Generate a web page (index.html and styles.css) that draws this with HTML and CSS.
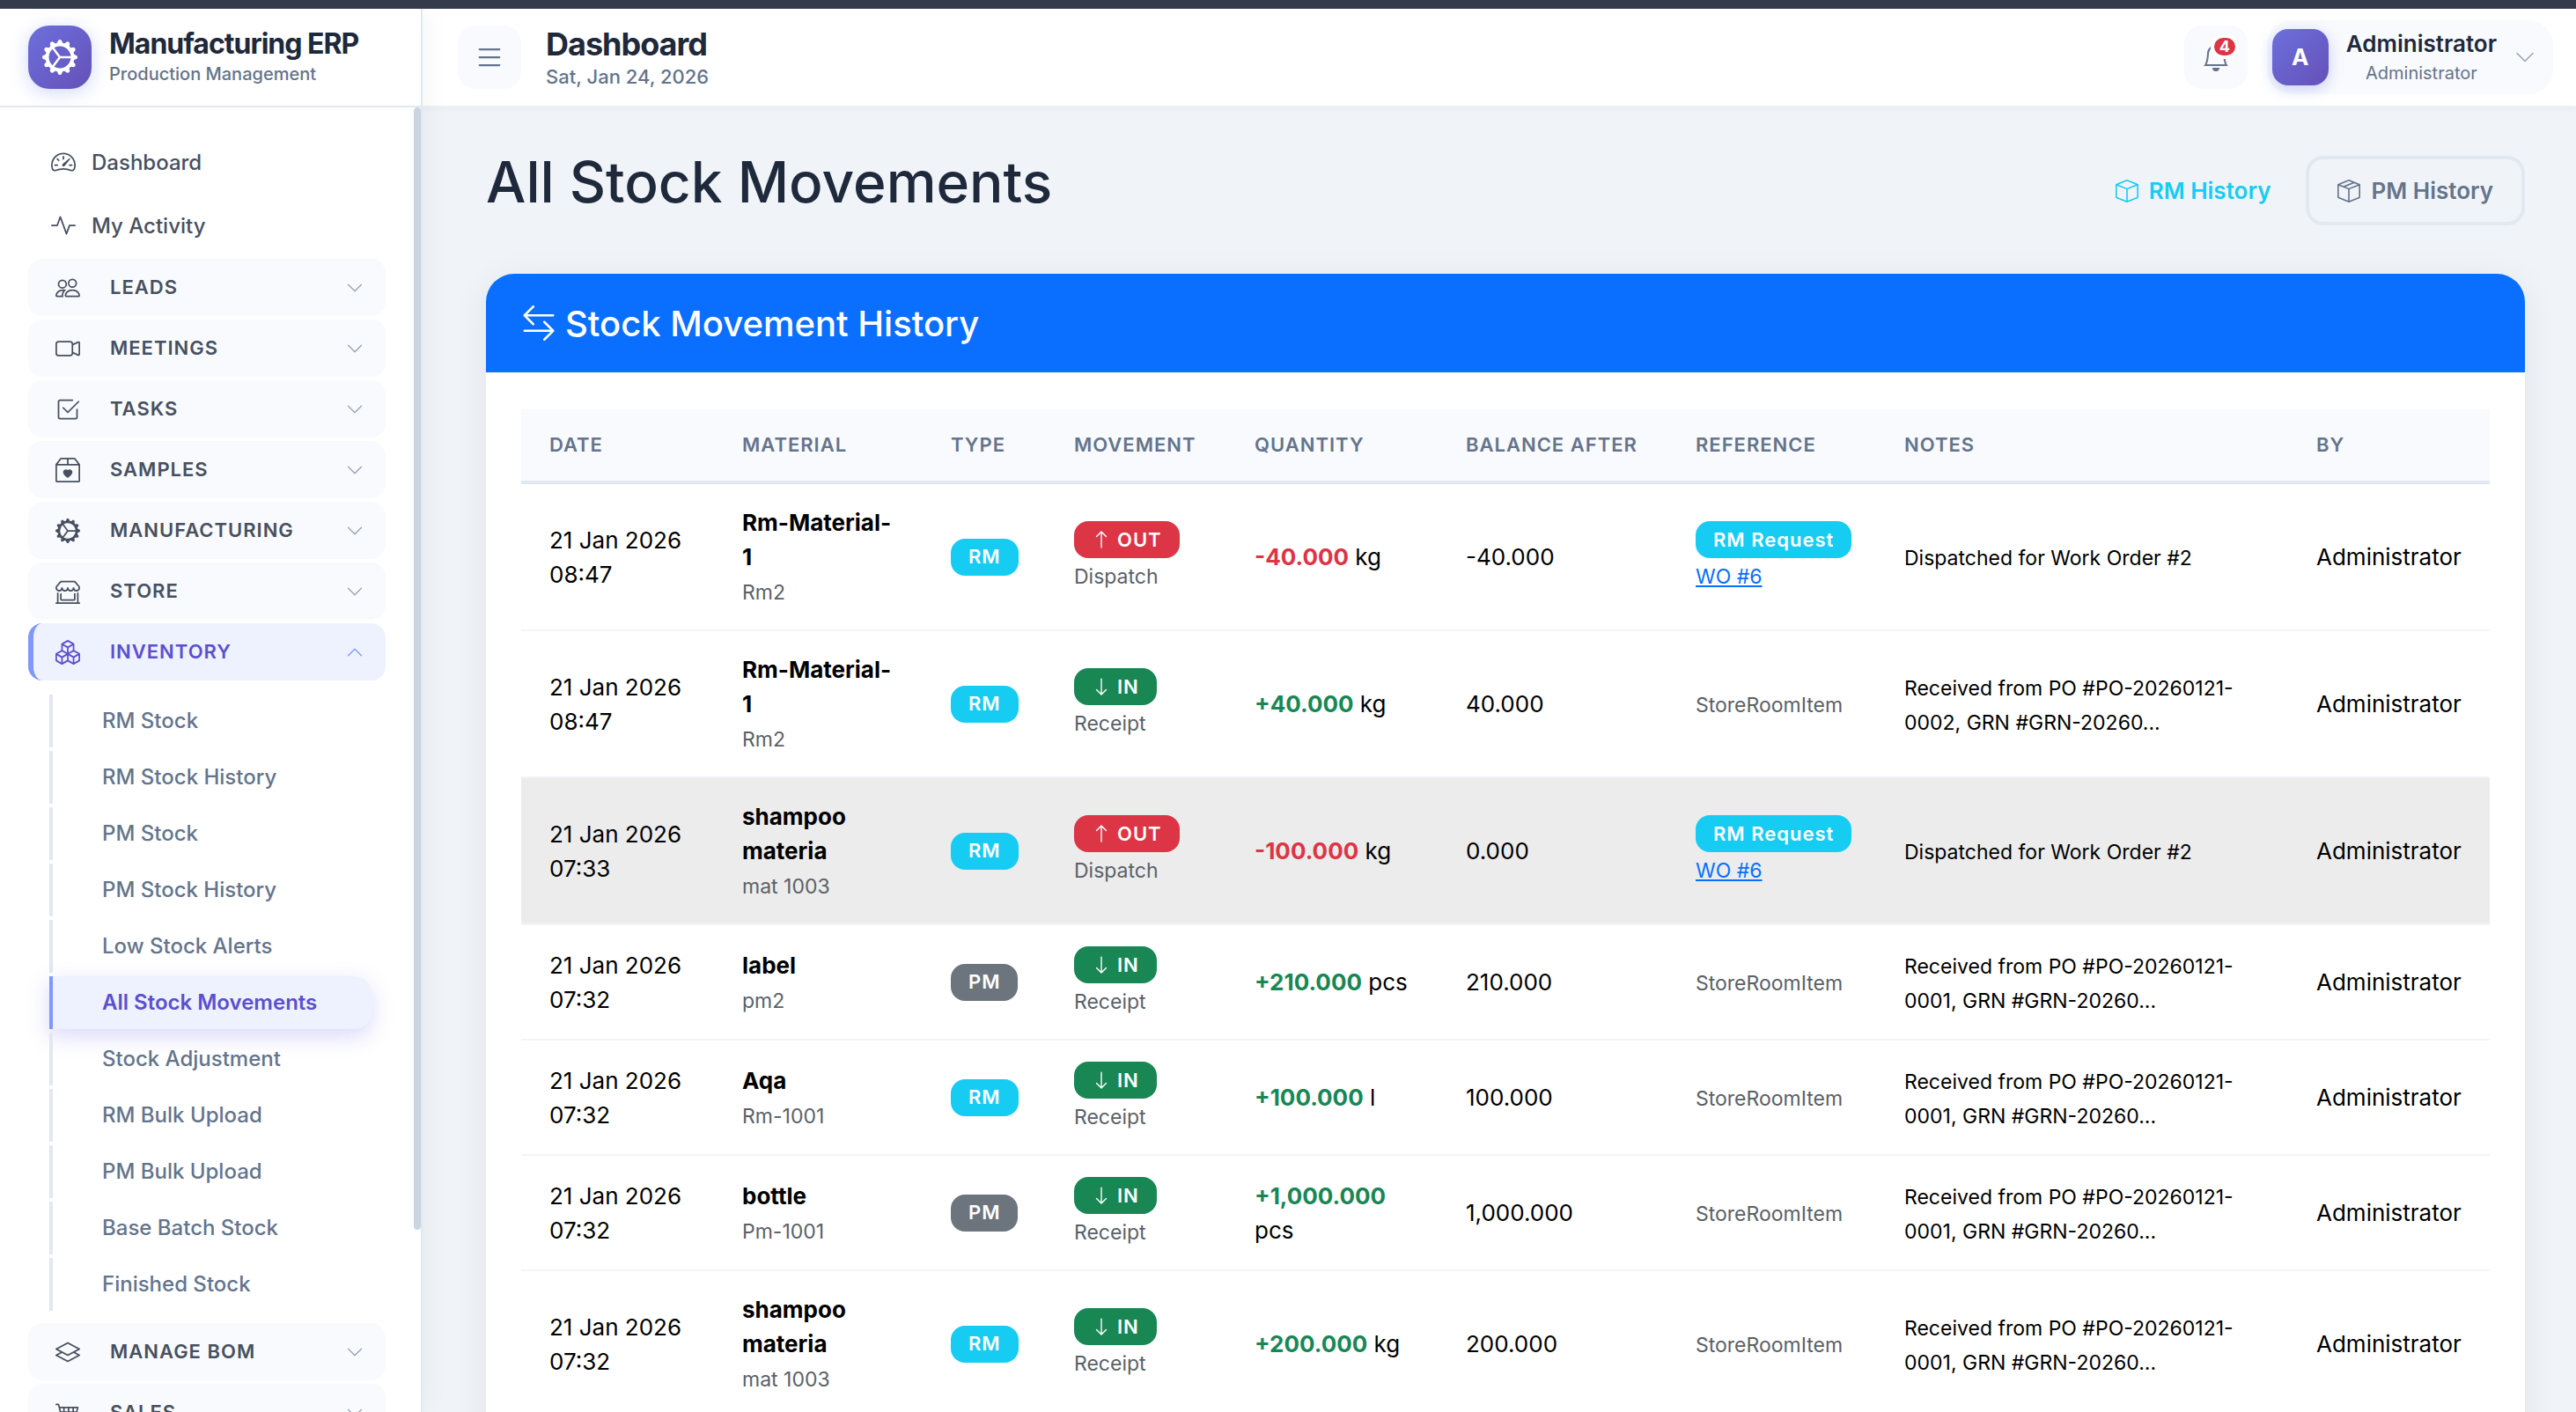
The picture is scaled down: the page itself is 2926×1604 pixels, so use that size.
FILE: index.html
```html
<!DOCTYPE html>
<html lang="en">
<head>
<meta charset="utf-8">
<title>All Stock Movements - Manufacturing ERP</title>
<link rel="stylesheet" href="styles.css">
</head>
<body>
<svg class="sprite" aria-hidden="true">
  <symbol id="gear" viewBox="0 0 16 16"><path d="M7.068.727c.243-.97 1.62-.97 1.864 0l.071.286a.96.96 0 0 0 1.622.434l.205-.211c.695-.719 1.888-.03 1.613.931l-.08.284a.96.96 0 0 0 1.187 1.187l.283-.081c.96-.275 1.65.918.931 1.613l-.211.205a.96.96 0 0 0 .434 1.622l.286.071c.97.243.97 1.62 0 1.864l-.286.071a.96.96 0 0 0-.434 1.622l.211.205c.719.695.03 1.888-.931 1.613l-.284-.08a.96.96 0 0 0-1.187 1.187l.081.283c.275.96-.918 1.65-1.613.931l-.205-.211a.96.96 0 0 0-1.622.434l-.071.286c-.243.97-1.62.97-1.864 0l-.071-.286a.96.96 0 0 0-1.622-.434l-.205.211c-.695.719-1.888.03-1.613-.931l.08-.284a.96.96 0 0 0-1.186-1.187l-.284.081c-.96.275-1.65-.918-.931-1.613l.211-.205a.96.96 0 0 0-.434-1.622l-.286-.071c-.97-.243-.97-1.62 0-1.864l.286-.071a.96.96 0 0 0 .434-1.622l-.211-.205c-.719-.695-.03-1.888.931-1.613l.284.08a.96.96 0 0 0 1.187-1.186l-.081-.284c-.275-.96.918-1.65 1.613-.931l.205.211a.96.96 0 0 0 1.622-.434zM12.973 8.5H8.25l-2.834 3.779A4.998 4.998 0 0 0 12.973 8.5m0-1a4.998 4.998 0 0 0-7.557-3.779l2.834 3.78zM5.048 3.967l-.087.065zm-.431.355A4.98 4.98 0 0 0 3.002 8c0 1.455.622 2.765 1.615 3.678L7.375 8zm.344 7.646.087.065z"/></symbol>
  <symbol id="speedometer" viewBox="0 0 16 16"><path d="M8 4a.5.5 0 0 1 .5.5V6a.5.5 0 0 1-1 0V4.5A.5.5 0 0 1 8 4M3.732 5.732a.5.5 0 0 1 .707 0l.915.914a.5.5 0 1 1-.708.708l-.914-.915a.5.5 0 0 1 0-.707M2 10a.5.5 0 0 1 .5-.5h1.586a.5.5 0 0 1 0 1H2.5A.5.5 0 0 1 2 10m9.5 0a.5.5 0 0 1 .5-.5h1.5a.5.5 0 0 1 0 1H12a.5.5 0 0 1-.5-.5m.754-4.246a.39.39 0 0 0-.527-.02L7.547 9.31a.91.91 0 1 0 1.302 1.258l3.434-4.297a.39.39 0 0 0-.029-.518z"/><path fill-rule="evenodd" d="M0 10a8 8 0 1 1 15.547 2.661c-.442 1.253-1.845 1.602-2.932 1.25C11.309 13.488 9.475 13 8 13c-1.474 0-3.31.488-4.615.911-1.087.352-2.49.003-2.932-1.25A8 8 0 0 1 0 10m8-7a7 7 0 0 0-6.603 9.329c.203.575.923.876 1.68.63C4.397 12.533 6.358 12 8 12s3.604.532 4.923.96c.757.245 1.477-.056 1.68-.631A7 7 0 0 0 8 3"/></symbol>
  <symbol id="activity" viewBox="0 0 16 16"><path fill-rule="evenodd" d="M6 2a.5.5 0 0 1 .47.33L10 12.036l1.53-4.208A.5.5 0 0 1 12 7.5h3.5a.5.5 0 0 1 0 1h-3.15l-1.88 5.17a.5.5 0 0 1-.94 0L6 3.964 4.47 8.171A.5.5 0 0 1 4 8.5H.5a.5.5 0 0 1 0-1h3.15l1.88-5.17A.5.5 0 0 1 6 2"/></symbol>
  <symbol id="people" viewBox="0 0 16 16"><path d="M15 14s1 0 1-1-1-4-5-4-5 3-5 4 1 1 1 1zm-7.978-1L7 12.996c.001-.264.167-1.03.76-1.72C8.312 10.629 9.282 10 11 10c1.717 0 2.687.63 3.24 1.276.593.69.758 1.457.76 1.72l-.008.002-.014.002zM11 7a2 2 0 1 0 0-4 2 2 0 0 0 0 4m3-2a3 3 0 1 1-6 0 3 3 0 0 1 6 0M6.936 9.28a6 6 0 0 0-1.23-.247A7 7 0 0 0 5 9c-4 0-5 3-5 4q0 1 1 1h4.216A2.24 2.24 0 0 1 5 13c0-1.01.377-2.042 1.09-2.904.243-.294.526-.569.846-.816M4.92 10A5.5 5.5 0 0 0 4 13H1c0-.26.164-1.03.76-1.724.545-.636 1.492-1.256 3.16-1.275ZM1.5 5.5a3 3 0 1 1 6 0 3 3 0 0 1-6 0m3-2a2 2 0 1 0 0 4 2 2 0 0 0 0-4"/></symbol>
  <symbol id="camera" viewBox="0 0 16 16"><path fill-rule="evenodd" d="M0 5a2 2 0 0 1 2-2h7.5a2 2 0 0 1 1.983 1.738l3.11-1.382A1 1 0 0 1 16 4.269v7.462a1 1 0 0 1-1.406.913l-3.111-1.382A2 2 0 0 1 9.5 13H2a2 2 0 0 1-2-2zm11.5 5.175 3.5 1.556V4.269l-3.5 1.556zM2 4a1 1 0 0 0-1 1v6a1 1 0 0 0 1 1h7.5a1 1 0 0 0 1-1V5a1 1 0 0 0-1-1z"/></symbol>
  <symbol id="check" viewBox="0 0 16 16"><path d="M3 14.5A1.5 1.5 0 0 1 1.5 13V3A1.5 1.5 0 0 1 3 1.5h8a.5.5 0 0 1 0 1H3a.5.5 0 0 0-.5.5v10a.5.5 0 0 0 .5.5h10a.5.5 0 0 0 .5-.5V8a.5.5 0 0 1 1 0v5a1.5 1.5 0 0 1-1.5 1.5z"/><path d="m8.354 10.354 7-7a.5.5 0 0 0-.708-.708L8 9.293 5.354 6.646a.5.5 0 1 0-.708.708l3 3a.5.5 0 0 0 .708 0"/></symbol>
  <symbol id="box-heart" viewBox="0 0 16 16"><path d="M8 7.982C9.664 6.309 13.825 9.236 8 13 2.175 9.236 6.336 6.31 8 7.982"/><path d="M3.75 0a1 1 0 0 0-.8.4L.1 4.2a.5.5 0 0 0-.1.3V15a1 1 0 0 0 1 1h14a1 1 0 0 0 1-1V4.5a.5.5 0 0 0-.1-.3L13.05.4a1 1 0 0 0-.8-.4zm0 1H7.5v3h-6zM8.5 4V1h3.75l2.25 3zM15 5v10H1V5z"/></symbol>
  <symbol id="shop" viewBox="0 0 16 16"><path d="M2.97 1.35A1 1 0 0 1 3.73 1h8.54a1 1 0 0 1 .76.35l2.609 3.044A1.5 1.5 0 0 1 16 5.37v.255a2.375 2.375 0 0 1-4.25 1.458A2.37 2.37 0 0 1 9.875 8 2.37 2.37 0 0 1 8 7.083 2.37 2.37 0 0 1 6.125 8a2.37 2.37 0 0 1-1.875-.917A2.375 2.375 0 0 1 0 5.625V5.37a1.5 1.5 0 0 1 .361-.976zm1.78 4.275a1.375 1.375 0 0 0 2.75 0 .5.5 0 0 1 1 0 1.375 1.375 0 0 0 2.75 0 .5.5 0 0 1 1 0 1.375 1.375 0 1 0 2.75 0V5.37a.5.5 0 0 0-.12-.325L12.27 2H3.73L1.12 5.045A.5.5 0 0 0 1 5.37v.255a1.375 1.375 0 0 0 2.75 0 .5.5 0 0 1 1 0M1.5 8.5A.5.5 0 0 1 2 9v6h12V9a.5.5 0 0 1 1 0v6h.5a.5.5 0 0 1 0 1H.5a.5.5 0 0 1 0-1H1V9a.5.5 0 0 1 .5-.5m2 .5a.5.5 0 0 1 .5.5V13h8V9.5a.5.5 0 0 1 1 0V13a1 1 0 0 1-1 1H4a1 1 0 0 1-1-1V9.5a.5.5 0 0 1 .5-.5"/></symbol>
  <symbol id="boxes" viewBox="0 0 16 16"><path d="M7.752.066a.5.5 0 0 1 .496 0l3.75 2.143a.5.5 0 0 1 .252.434v3.995l3.498 2A.5.5 0 0 1 16 9.07v4.286a.5.5 0 0 1-.252.434l-3.75 2.143a.5.5 0 0 1-.496 0l-3.502-2-3.502 2.001a.5.5 0 0 1-.496 0l-3.75-2.143A.5.5 0 0 1 0 13.357V9.071a.5.5 0 0 1 .252-.434L3.75 6.638V2.643a.5.5 0 0 1 .252-.434zM4.25 7.504 1.508 9.071l2.742 1.567 2.742-1.567zM7.5 9.933l-2.75 1.571v3.134l2.75-1.571zm1 3.134 2.75 1.571v-3.134L8.5 9.933zm.508-3.996 2.742 1.567 2.742-1.567-2.742-1.567zm2.242-2.433V3.504L8.5 5.076V8.21zM7.5 8.21V5.076L4.75 3.504v3.134zM5.258 2.643 8 4.21l2.742-1.567L8 1.076zM15 9.933l-2.75 1.571v3.134L15 13.067zM3.75 14.638v-3.134L1 9.933v3.134z"/></symbol>
  <symbol id="layers" viewBox="0 0 16 16"><path d="M8.235 1.559a.5.5 0 0 0-.47 0l-7.5 4a.5.5 0 0 0 0 .882L3.188 8 .264 9.559a.5.5 0 0 0 0 .882l7.5 4a.5.5 0 0 0 .47 0l7.5-4a.5.5 0 0 0 0-.882L12.813 8l2.922-1.559a.5.5 0 0 0 0-.882zm3.515 7.008L14.438 10 8 13.433 1.562 10 4.25 8.567l3.515 1.874a.5.5 0 0 0 .47 0zM8 9.433 1.562 6 8 2.567 14.438 6z"/></symbol>
  <symbol id="cart" viewBox="0 0 16 16"><path d="M0 2.5A.5.5 0 0 1 .5 2H2a.5.5 0 0 1 .485.379L2.89 4H14.5a.5.5 0 0 1 .485.621l-1.5 6A.5.5 0 0 1 13 11H4a.5.5 0 0 1-.485-.379L1.61 3H.5a.5.5 0 0 1-.5-.5M3.14 5l.5 2H5V5zM6 5v2h2V5zm3 0v2h2V5zm3 0v2h1.36l.5-2zm1.11 3H12v2h.61zM11 8H9v2h2zM8 8H6v2h2zM5 8H3.89l.5 2H5zm0 5a1 1 0 1 0 0 2 1 1 0 0 0 0-2m-2 1a2 2 0 1 1 4 0 2 2 0 0 1-4 0m9-1a1 1 0 1 0 0 2 1 1 0 0 0 0-2m-2 1a2 2 0 1 1 4 0 2 2 0 0 1-4 0"/></symbol>
  <symbol id="list" viewBox="0 0 16 16"><path fill-rule="evenodd" d="M2.5 12a.5.5 0 0 1 .5-.5h10a.5.5 0 0 1 0 1H3a.5.5 0 0 1-.5-.5m0-4a.5.5 0 0 1 .5-.5h10a.5.5 0 0 1 0 1H3a.5.5 0 0 1-.5-.5m0-4a.5.5 0 0 1 .5-.5h10a.5.5 0 0 1 0 1H3a.5.5 0 0 1-.5-.5"/></symbol>
  <symbol id="bell" viewBox="0 0 16 16"><path d="M8 16a2 2 0 0 0 2-2H6a2 2 0 0 0 2 2M8 1.918l-.797.161A4 4 0 0 0 4 6c0 .628-.134 2.197-.459 3.742-.16.767-.376 1.566-.663 2.258h10.244c-.287-.692-.502-1.49-.663-2.258C12.134 8.197 12 6.628 12 6a4 4 0 0 0-3.203-3.92zM14.22 12c.223.447.481.801.78 1H1c.299-.199.557-.553.78-1C2.68 10.2 3 6.88 3 6c0-2.42 1.72-4.44 4.005-4.901a1 1 0 1 1 1.99 0A5 5 0 0 1 13 6c0 .88.32 4.2 1.22 6"/></symbol>
  <symbol id="chevron" viewBox="0 0 16 16"><path fill-rule="evenodd" d="M1.646 4.646a.5.5 0 0 1 .708 0L8 10.293l5.646-5.647a.5.5 0 0 1 .708.708l-6 6a.5.5 0 0 1-.708 0l-6-6a.5.5 0 0 1 0-.708"/></symbol>
  <symbol id="swap" viewBox="0 0 16 16"><path fill-rule="evenodd" d="M1 11.5a.5.5 0 0 0 .5.5h11.793l-3.147 3.146a.5.5 0 0 0 .708.708l4-4a.5.5 0 0 0 0-.708l-4-4a.5.5 0 0 0-.708.708L13.293 11H1.5a.5.5 0 0 0-.5.5m14-7a.5.5 0 0 1-.5.5H2.707l3.147 3.146a.5.5 0 1 1-.708.708l-4-4a.5.5 0 0 1 0-.708l4-4a.5.5 0 1 1 .708.708L2.707 4H14.5a.5.5 0 0 1 .5.5"/></symbol>
  <symbol id="box" viewBox="0 0 16 16"><path d="M8.186 1.113a.5.5 0 0 0-.372 0L1.846 3.5 8 5.961 14.154 3.5zM15 4.239l-6.5 2.6v7.922l6.5-2.6V4.24zM7.5 14.762V6.838L1 4.239v7.923zM7.443.184a1.5 1.5 0 0 1 1.114 0l7.129 2.852A.5.5 0 0 1 16 3.5v8.662a1 1 0 0 1-.629.928l-7.185 2.874a.5.5 0 0 1-.372 0L.63 13.09a1 1 0 0 1-.63-.928V3.5a.5.5 0 0 1 .314-.464z"/></symbol>
  <symbol id="box-seam" viewBox="0 0 16 16"><path d="M8.186 1.113a.5.5 0 0 0-.372 0L1.846 3.5l2.404.961L10.404 2zm3.564 1.426L5.596 5 8 5.961 14.154 3.5zm3.25 1.7-6.5 2.6v7.922l6.5-2.6V4.24zM7.5 14.762V6.838L1 4.239v7.923zM7.443.184a1.5 1.5 0 0 1 1.114 0l7.129 2.852A.5.5 0 0 1 16 3.5v8.662a1 1 0 0 1-.629.928l-7.185 2.874a.5.5 0 0 1-.372 0L.63 13.09a1 1 0 0 1-.63-.928V3.5a.5.5 0 0 1 .314-.464z"/></symbol>
  <symbol id="arrow-up" viewBox="0 0 16 16"><path fill-rule="evenodd" d="M8 15a.5.5 0 0 0 .5-.5V2.707l3.146 3.147a.5.5 0 0 0 .708-.708l-4-4a.5.5 0 0 0-.708 0l-4 4a.5.5 0 1 0 .708.708L7.5 2.707V14.5a.5.5 0 0 0 .5.5"/></symbol>
  <symbol id="arrow-down" viewBox="0 0 16 16"><path fill-rule="evenodd" d="M8 1a.5.5 0 0 1 .5.5v11.793l3.146-3.147a.5.5 0 0 1 .708.708l-4 4a.5.5 0 0 1-.708 0l-4-4a.5.5 0 0 1 .708-.708L7.5 13.293V1.5A.5.5 0 0 1 8 1"/></symbol>
</svg>

<div class="layout">
  <aside class="sidebar">
    <div class="brand">
      <span class="brand-logo"><svg class="icon icon-40"><use href="#gear"/></svg></span>
      <div>
        <div class="brand-name">Manufacturing ERP</div>
        <div class="brand-sub">Production Management</div>
      </div>
    </div>
    <nav class="nav" aria-label="Main">
      <a class="nav-link" href="#"><svg class="icon icon-28"><use href="#speedometer"/></svg>Dashboard</a>
      <a class="nav-link" href="#"><svg class="icon icon-28"><use href="#activity"/></svg>My Activity</a>
      <button class="nav-group" type="button"><svg class="icon icon-28"><use href="#people"/></svg><span>Leads</span><svg class="icon chevron"><use href="#chevron"/></svg></button>
      <button class="nav-group" type="button"><svg class="icon icon-28"><use href="#camera"/></svg><span>Meetings</span><svg class="icon chevron"><use href="#chevron"/></svg></button>
      <button class="nav-group" type="button"><svg class="icon icon-28"><use href="#check"/></svg><span>Tasks</span><svg class="icon chevron"><use href="#chevron"/></svg></button>
      <button class="nav-group" type="button"><svg class="icon icon-28"><use href="#box-heart"/></svg><span>Samples</span><svg class="icon chevron"><use href="#chevron"/></svg></button>
      <button class="nav-group" type="button"><svg class="icon icon-28"><use href="#gear"/></svg><span>Manufacturing</span><svg class="icon chevron"><use href="#chevron"/></svg></button>
      <button class="nav-group" type="button"><svg class="icon icon-28"><use href="#shop"/></svg><span>Store</span><svg class="icon chevron"><use href="#chevron"/></svg></button>
      <button class="nav-group open" type="button" aria-expanded="true"><svg class="icon icon-28"><use href="#boxes"/></svg><span>Inventory</span><svg class="icon chevron"><use href="#chevron"/></svg></button>
      <div class="subnav">
        <a href="#">RM Stock</a>
        <a href="#">RM Stock History</a>
        <a href="#">PM Stock</a>
        <a href="#">PM Stock History</a>
        <a href="#">Low Stock Alerts</a>
        <a class="active" href="#" aria-current="page">All Stock Movements</a>
        <a href="#">Stock Adjustment</a>
        <a href="#">RM Bulk Upload</a>
        <a href="#">PM Bulk Upload</a>
        <a href="#">Base Batch Stock</a>
        <a href="#">Finished Stock</a>
      </div>
      <button class="nav-group" type="button"><svg class="icon icon-28"><use href="#layers"/></svg><span>Manage BOM</span><svg class="icon chevron"><use href="#chevron"/></svg></button>
      <button class="nav-group" type="button"><svg class="icon icon-28"><use href="#cart"/></svg><span>Sales</span><svg class="icon chevron"><use href="#chevron"/></svg></button>
      <div class="scroll-thumb"></div>
    </nav>
  </aside>

  <div class="page">
    <header class="topbar">
      <button class="icon-btn toggle" type="button" aria-label="Toggle menu"><svg class="icon icon-36"><use href="#list"/></svg></button>
      <div class="topbar-title">
        <div class="topbar-name">Dashboard</div>
        <div class="topbar-date">Sat, Jan 24, 2026</div>
      </div>
      <button class="icon-btn bell" type="button" aria-label="Notifications"><svg class="icon icon-32"><use href="#bell"/></svg><span class="count">4</span></button>
      <button class="user" type="button">
        <span class="avatar">A</span>
        <span class="user-text"><span class="user-name">Administrator</span><span class="user-role">Administrator</span></span>
        <svg class="icon icon-24"><use href="#chevron"/></svg>
      </button>
    </header>

    <main class="content">
      <div class="page-head">
        <h1>All Stock Movements</h1>
        <div class="actions">
          <a class="btn btn-info" href="#"><svg class="icon icon-26"><use href="#box"/></svg>RM History</a>
          <a class="btn btn-outline" href="#"><svg class="icon icon-26"><use href="#box-seam"/></svg>PM History</a>
        </div>
      </div>

      <section class="card">
        <h2 class="card-head"><svg class="icon icon-40"><use href="#swap"/></svg>Stock Movement History</h2>
        <div class="card-body">
          <table>
            <colgroup>
              <col class="c-date"><col class="c-material"><col class="c-type"><col class="c-movement"><col class="c-quantity"><col class="c-balance"><col class="c-reference"><col><col class="c-by">
            </colgroup>
            <thead>
              <tr><th>Date</th><th>Material</th><th>Type</th><th>Movement</th><th>Quantity</th><th>Balance After</th><th>Reference</th><th>Notes</th><th>By</th></tr>
            </thead>
            <tbody>
              <tr>
                <td>21 Jan 2026 08:47</td>
                <td><strong>Rm-Material-1</strong><br><small>Rm2</small></td>
                <td><span class="badge info">RM</span></td>
                <td><span class="badge danger"><svg class="icon icon-22"><use href="#arrow-up"/></svg>OUT</span><small>Dispatch</small></td>
                <td><strong class="minus">-40.000</strong> kg</td>
                <td>-40.000</td>
                <td><span class="badge info">RM Request</span><small><a href="#">WO #6</a></small></td>
                <td><small class="note">Dispatched for Work Order #2</small></td>
                <td>Administrator</td>
              </tr>
              <tr>
                <td>21 Jan 2026 08:47</td>
                <td><strong>Rm-Material-1</strong><br><small>Rm2</small></td>
                <td><span class="badge info">RM</span></td>
                <td><span class="badge success"><svg class="icon icon-22"><use href="#arrow-down"/></svg>IN</span><small>Receipt</small></td>
                <td><strong class="plus">+40.000</strong> kg</td>
                <td>40.000</td>
                <td><small>StoreRoomItem</small></td>
                <td><small class="note">Received from PO #PO-20260121-0002, GRN #GRN-20260...</small></td>
                <td>Administrator</td>
              </tr>
              <tr class="hovered">
                <td>21 Jan 2026 07:33</td>
                <td><strong>shampoo materia</strong><br><small>mat 1003</small></td>
                <td><span class="badge info">RM</span></td>
                <td><span class="badge danger"><svg class="icon icon-22"><use href="#arrow-up"/></svg>OUT</span><small>Dispatch</small></td>
                <td><strong class="minus">-100.000</strong> kg</td>
                <td>0.000</td>
                <td><span class="badge info">RM Request</span><small><a href="#">WO #6</a></small></td>
                <td><small class="note">Dispatched for Work Order #2</small></td>
                <td>Administrator</td>
              </tr>
              <tr>
                <td>21 Jan 2026 07:32</td>
                <td><strong>label</strong><br><small>pm2</small></td>
                <td><span class="badge muted">PM</span></td>
                <td><span class="badge success"><svg class="icon icon-22"><use href="#arrow-down"/></svg>IN</span><small>Receipt</small></td>
                <td><strong class="plus">+210.000</strong> pcs</td>
                <td>210.000</td>
                <td><small>StoreRoomItem</small></td>
                <td><small class="note">Received from PO #PO-20260121-0001, GRN #GRN-20260...</small></td>
                <td>Administrator</td>
              </tr>
              <tr>
                <td>21 Jan 2026 07:32</td>
                <td><strong>Aqa</strong><br><small>Rm-1001</small></td>
                <td><span class="badge info">RM</span></td>
                <td><span class="badge success"><svg class="icon icon-22"><use href="#arrow-down"/></svg>IN</span><small>Receipt</small></td>
                <td><strong class="plus">+100.000</strong> l</td>
                <td>100.000</td>
                <td><small>StoreRoomItem</small></td>
                <td><small class="note">Received from PO #PO-20260121-0001, GRN #GRN-20260...</small></td>
                <td>Administrator</td>
              </tr>
              <tr>
                <td>21 Jan 2026 07:32</td>
                <td><strong>bottle</strong><br><small>Pm-1001</small></td>
                <td><span class="badge muted">PM</span></td>
                <td><span class="badge success"><svg class="icon icon-22"><use href="#arrow-down"/></svg>IN</span><small>Receipt</small></td>
                <td><strong class="plus">+1,000.000</strong> pcs</td>
                <td>1,000.000</td>
                <td><small>StoreRoomItem</small></td>
                <td><small class="note">Received from PO #PO-20260121-0001, GRN #GRN-20260...</small></td>
                <td>Administrator</td>
              </tr>
              <tr>
                <td>21 Jan 2026 07:32</td>
                <td><strong>shampoo materia</strong><br><small>mat 1003</small></td>
                <td><span class="badge info">RM</span></td>
                <td><span class="badge success"><svg class="icon icon-22"><use href="#arrow-down"/></svg>IN</span><small>Receipt</small></td>
                <td><strong class="plus">+200.000</strong> kg</td>
                <td>200.000</td>
                <td><small>StoreRoomItem</small></td>
                <td><small class="note">Received from PO #PO-20260121-0001, GRN #GRN-20260...</small></td>
                <td>Administrator</td>
              </tr>
            </tbody>
          </table>
        </div>
      </section>
    </main>
  </div>
</div>
</body>
</html>
```

FILE: styles.css
```css
* {
  box-sizing: border-box;
}

:root {
  --ink: #1e293b;
  --slate: #64748b;
  --line: #e2e8f0;
  --soft: #f9fafd;
  --primary: #5b4fcf;
  --tint: #eef2ff;
}

body {
  margin: 0;
  font-family: Inter, "Liberation Sans", sans-serif;
  font-size: 26px;
  line-height: 39px;
  color: #000;
  background: #f0f4f9;
}

button {
  margin: 0;
  padding: 0;
  border: 0;
  font: inherit;
  color: inherit;
  cursor: pointer;
}

a {
  text-decoration: none;
}

.sprite {
  display: none;
}

.icon {
  display: block;
  flex: none;
  fill: currentColor;
}

.icon-22 { width: 22px; height: 22px; }
.icon-24 { width: 24px; height: 24px; }
.icon-26 { width: 26px; height: 26px; }
.icon-28 { width: 28px; height: 28px; }
.icon-32 { width: 32px; height: 32px; }
.icon-36 { width: 36px; height: 36px; }
.icon-40 { width: 40px; height: 40px; }

.layout {
  display: flex;
  height: 100vh;
  overflow: hidden;
  border-top: 10px solid #353b4b;
}

/* Sidebar */

.sidebar {
  position: relative;
  z-index: 2;
  flex: none;
  display: flex;
  flex-direction: column;
  width: 480px;
  background: #fff;
  border-right: 2px solid var(--line);
  box-shadow: 0 0 30px rgba(0, 0, 0, 0.06);
}

.brand {
  flex: none;
  display: flex;
  align-items: center;
  gap: 20px;
  height: 112px;
  padding: 0 32px;
  border-bottom: 2px solid var(--line);
}

.brand-logo {
  display: grid;
  place-items: center;
  width: 72px;
  height: 72px;
  border-radius: 24px;
  color: #fff;
  background: linear-gradient(135deg, #6c70dc, #6650b8);
  box-shadow: 0 4px 20px rgba(102, 126, 234, 0.3);
}

.brand-name {
  font-size: 32px;
  line-height: 38px;
  font-weight: 700;
  letter-spacing: -1px;
  color: var(--ink);
}

.brand-sub {
  font-size: 20px;
  line-height: 30px;
  font-weight: 500;
  color: var(--slate);
}

.nav {
  position: relative;
  flex: 1;
  min-height: 0;
  display: flex;
  flex-direction: column;
  gap: 4px;
  padding: 28px 40px 0 32px;
  overflow: hidden;
}

.nav-link {
  flex: none;
  display: flex;
  align-items: center;
  gap: 18px;
  height: 68px;
  padding-left: 26px;
  font-size: 24px;
  font-weight: 500;
  color: #475060;
}

.nav-group {
  flex: none;
  display: flex;
  align-items: center;
  height: 65px;
  padding: 0 25px 0 31px;
  border-radius: 16px;
  background: var(--soft);
  font-size: 22px;
  font-weight: 600;
  letter-spacing: 1px;
  text-align: left;
  text-transform: uppercase;
  color: #475060;
}

.nav-group span {
  flex: 1;
  margin-left: 34px;
}

.chevron {
  width: 20px;
  height: 20px;
  color: #94a3b8;
}

.nav-group.open {
  padding-left: 25px;
  border-left: 6px solid #8098f9;
  background: var(--tint);
  color: var(--primary);
}

.open .chevron {
  color: #8098f9;
  transform: rotate(180deg);
}

.subnav {
  flex: none;
  display: flex;
  flex-direction: column;
  gap: 4px;
  padding: 12px 16px 10px 24px;
}

.subnav a {
  height: 60px;
  padding-left: 56px;
  border-left: 4px solid var(--line);
  font-size: 24px;
  line-height: 60px;
  font-weight: 500;
  color: var(--slate);
}

.subnav .active {
  border-left-color: #8098f9;
  border-radius: 0 20px 20px 0;
  background: var(--tint);
  font-weight: 600;
  color: var(--primary);
  box-shadow: 0 8px 24px rgba(102, 100, 234, 0.25);
}

.scroll-thumb {
  position: absolute;
  top: 0;
  right: 0;
  width: 8px;
  height: 86%;
  border-radius: 4px;
  background: #cbd5e1;
}

/* Top bar */

.page {
  flex: 1;
  min-width: 0;
  display: flex;
  flex-direction: column;
}

.topbar {
  position: relative;
  z-index: 1;
  flex: none;
  display: flex;
  align-items: center;
  height: 112px;
  padding: 0 26px 0 40px;
  background: #fff;
  border-bottom: 2px solid #edf1f6;
  box-shadow: 0 2px 6px rgba(0, 0, 0, 0.04);
}

.icon-btn {
  display: grid;
  place-items: center;
  width: 72px;
  height: 72px;
  border-radius: 20px;
  background: var(--soft);
  color: var(--slate);
}

.topbar-title {
  flex: 1;
  margin-left: 28px;
}

.topbar-name {
  font-size: 36px;
  line-height: 44px;
  font-weight: 700;
  letter-spacing: -1px;
  color: var(--ink);
}

.topbar-date {
  font-size: 22px;
  line-height: 30px;
  font-weight: 500;
  color: var(--slate);
}

.bell {
  position: relative;
  margin-right: 22px;
}

.count {
  position: absolute;
  top: 10px;
  right: 10px;
  min-width: 32px;
  height: 28px;
  border: 4px solid #fff;
  border-radius: 14px;
  background: #dc3545;
  font-size: 18px;
  line-height: 20px;
  font-weight: 700;
  color: #fff;
}

.user {
  display: flex;
  align-items: center;
  height: 84px;
  padding: 0 20px 0 6px;
  border-radius: 28px;
  background: var(--soft);
}

.avatar {
  width: 64px;
  height: 64px;
  border-radius: 18px;
  background: linear-gradient(135deg, #6c70dc, #6650b8);
  box-shadow: 0 4px 16px rgba(102, 126, 234, 0.35);
  font-weight: 700;
  line-height: 64px;
  color: #fff;
}

.user-text {
  display: flex;
  flex-direction: column;
  margin: 0 20px;
}

.user-name {
  font-weight: 600;
  line-height: 36px;
  color: var(--ink);
}

.user-role {
  font-size: 20px;
  line-height: 30px;
  color: var(--slate);
}

.user .icon {
  color: #94a3b8;
}

/* Content */

.content {
  flex: 1;
  min-height: 0;
  padding: 48px 58px 0 72px;
  overflow: hidden;
}

.page-head {
  display: flex;
  justify-content: space-between;
  align-items: center;
  margin-bottom: 48px;
}

h1 {
  margin: 0 0 20px;
  font-size: 64px;
  line-height: 73px;
  font-weight: 500;
  color: var(--ink);
}

.actions {
  display: flex;
  gap: 4px;
}

.btn {
  display: flex;
  align-items: center;
  gap: 12px;
  padding: 16px 32px;
  border: 4px solid transparent;
  border-radius: 20px;
  font-weight: 600;
}

.btn-info {
  color: #17ccf3;
}

.btn-outline {
  border-color: var(--line);
  color: var(--slate);
}

.card {
  border-radius: 32px;
  background: #fff;
  box-shadow: 0 8px 40px rgba(0, 0, 0, 0.07);
}

.card-head {
  display: flex;
  align-items: center;
  gap: 10px;
  height: 112px;
  margin: 0;
  padding: 0 40px;
  border-radius: 32px 32px 0 0;
  background: #0a6fff;
  font-size: 40px;
  font-weight: 500;
  color: #fff;
}

.card-body {
  padding: 42px 40px;
}

table {
  width: 100%;
  border-collapse: separate;
  border-spacing: 0;
  table-layout: fixed;
}

.c-date { width: 219px; }
.c-material { width: 237px; }
.c-type { width: 140px; }
.c-movement { width: 205px; }
.c-quantity { width: 240px; }
.c-balance { width: 261px; }
.c-reference { width: 237px; }
.c-by { width: 229px; }

th {
  height: 85px;
  padding: 0 32px;
  border-bottom: 4px solid var(--line);
  background: var(--soft);
  font-size: 22px;
  font-weight: 600;
  letter-spacing: 1px;
  text-align: left;
  text-transform: uppercase;
  white-space: nowrap;
  color: var(--slate);
}

td {
  padding: 24px 30px 24px 32px;
  border-bottom: 2px solid #f1f5f9;
  vertical-align: middle;
}

.hovered td {
  background: #ececec;
}

td strong {
  font-weight: 700;
}

td small {
  font-size: 23px;
  line-height: 34px;
  color: #5b6167;
}

td small a {
  color: #0a6fff;
  text-decoration: underline;
}

td .note {
  color: #000;
}

.minus { color: #dc3545; }
.plus { color: #198754; }

.badge {
  display: flex;
  align-items: center;
  gap: 7px;
  width: fit-content;
  height: 42px;
  padding: 0 20px;
  border-radius: 16px;
  font-size: 22px;
  font-weight: 600;
  letter-spacing: 1px;
  white-space: nowrap;
  color: #fff;
}

.info { background: #17ccf3; }
.danger { background: #dc3545; }
.success { background: #198754; }
.muted { background: #6c757d; }
```
